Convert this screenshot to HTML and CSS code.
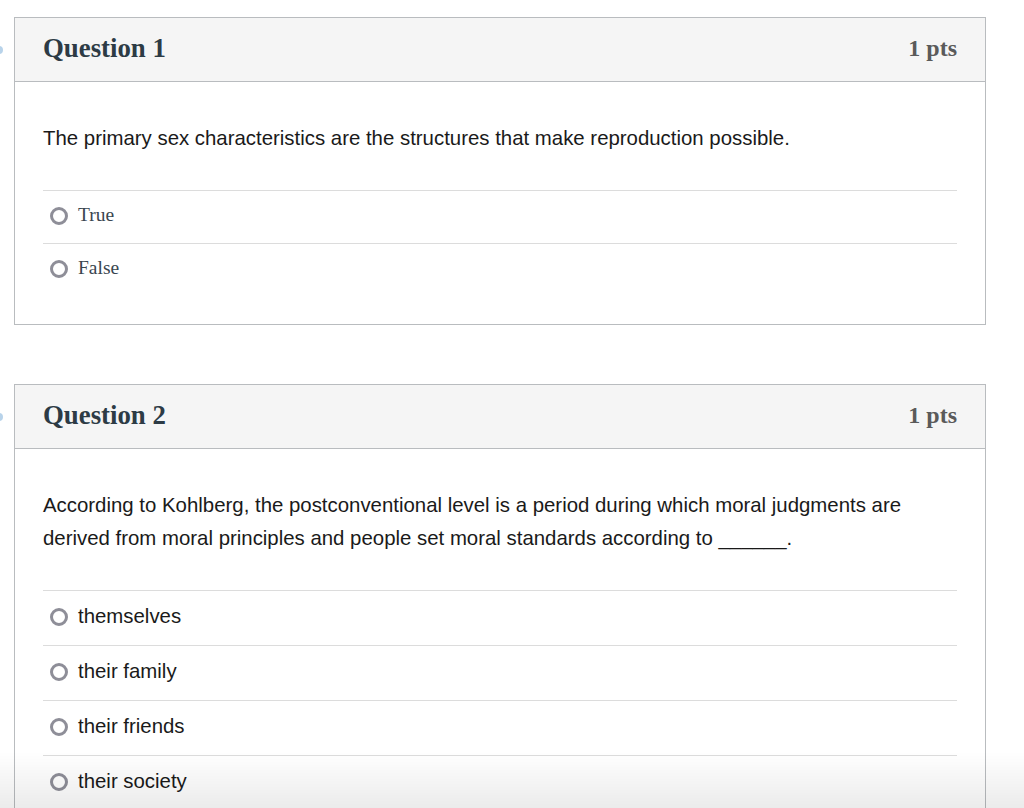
FILE: index.html
```html
<!DOCTYPE html>
<html>
<head>
<meta charset="utf-8">
<link rel="stylesheet" href="styles.css">
</head>
<body>
<div class="page">
  <div class="question">
    <span class="marker"></span>
    <div class="q-header">
      <span class="q-title">Question 1</span>
      <span class="q-pts">1 pts</span>
    </div>
    <div class="q-body q1">
      <p class="q-text">The primary sex characteristics are the structures that make reproduction possible.</p>
      <div class="answers">
        <div class="answer serif"><span class="radio"></span>True</div>
        <div class="answer serif"><span class="radio"></span>False</div>
      </div>
    </div>
  </div>

  <div class="question">
    <span class="marker"></span>
    <div class="q-header">
      <span class="q-title">Question 2</span>
      <span class="q-pts">1 pts</span>
    </div>
    <div class="q-body q2">
      <p class="q-text">According to Kohlberg, the postconventional level is a period during which moral judgments are derived from moral principles and people set moral standards according to ______.</p>
      <div class="answers">
        <div class="answer sans"><span class="radio"></span>themselves</div>
        <div class="answer sans"><span class="radio"></span>their family</div>
        <div class="answer sans"><span class="radio"></span>their friends</div>
        <div class="answer sans"><span class="radio"></span>their society</div>
      </div>
    </div>
  </div>
</div>
<div class="fade"></div>
</body>
</html>
```
FILE: styles.css
```css
html, body {
  margin: 0;
  padding: 0;
  background: #ffffff;
  overflow: hidden;
}
.page {
  padding: 17px 0 0 14px;
  display: flex;
  flex-direction: column;
  gap: 59px;
}
.question {
  position: relative;
  width: 970px;
  border: 1px solid #b9bcbf;
  background: #fff;
}
.marker {
  position: absolute;
  left: -20px;
  top: 28px;
  width: 8px;
  height: 8px;
  border-radius: 50%;
  background: #b8d3ea;
}
.q-header {
  height: 64px;
  box-sizing: border-box;
  background: #f5f5f5;
  border-bottom: 1px solid #b9bcbf;
  display: flex;
  align-items: center;
  justify-content: space-between;
  padding: 0 28px 2px 28px;
  font-family: "Liberation Serif", "Times New Roman", serif;
  font-weight: bold;
}
.q-title {
  font-size: 26.8px;
  color: #2d3b45;
}
.q-pts {
  font-size: 24px;
  color: #5a5a5a;
}
.q-body {
  padding: 40px 28px 28px 28px;
}
.q-text {
  margin: 0;
  font-family: "Liberation Sans", Arial, sans-serif;
  line-height: 33px;
  color: #1a1a1a;
  font-size: 20.4px;
  margin-bottom: 35px;
}
.answers {
  display: flex;
  flex-direction: column;
}
.answer {
  display: flex;
  align-items: center;
  border-top: 1px solid #dcdcdc;
  box-sizing: border-box;
  padding-left: 7px;
  padding-bottom: 4px;
}
.answer .radio {
  width: 12px;
  height: 12px;
  border: 3px solid #8e8e98;
  border-radius: 50%;
  margin-right: 10px;
  flex: none;
  position: relative;
  top: 1px;
}
.serif {
  height: 53px;
  font-family: "Liberation Serif", "Times New Roman", serif;
  font-size: 19.5px;
  color: #3a4650;
}
.sans {
  height: 55px;
  font-family: "Liberation Sans", Arial, sans-serif;
  font-size: 20.4px;
  color: #1a1a1a;
}
.fade {
  position: fixed;
  left: 0;
  right: 0;
  bottom: 0;
  height: 56px;
  background: linear-gradient(to bottom, rgba(0,0,0,0), rgba(0,0,0,0.08));
  pointer-events: none;
}
```
